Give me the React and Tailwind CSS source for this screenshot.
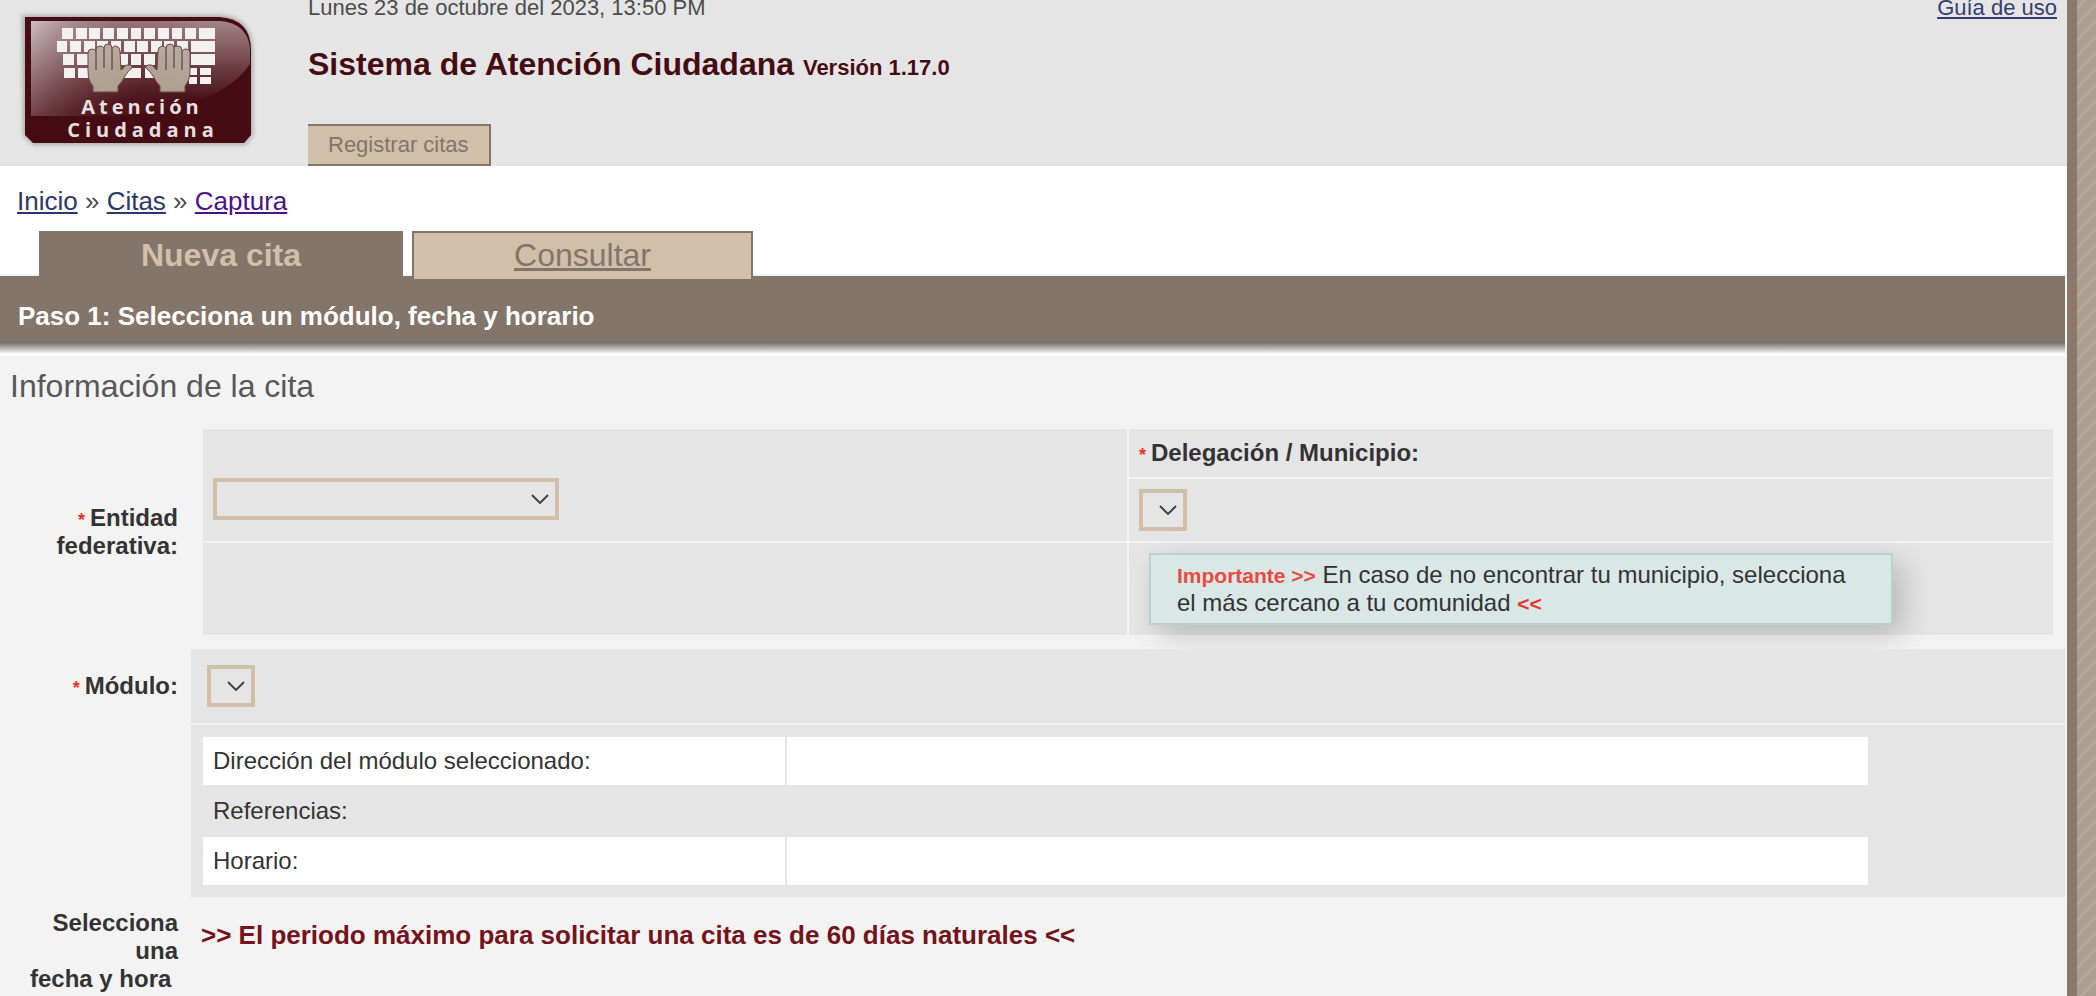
import React from 'react';

const keyRows = [
  { y: 28, h: 11, keys: [[62, 11], [76, 11], [89, 11], [103, 11], [117, 11], [131, 10], [144, 11], [158, 11], [172, 10], [185, 11], [199, 16]] },
  { y: 41, h: 11, keys: [[57, 10], [70, 11], [84, 11], [97, 11], [111, 10], [124, 11], [137, 11], [151, 11], [164, 10], [177, 11], [191, 24]] },
  { y: 54, h: 11, keys: [[63, 11], [77, 11], [90, 11], [104, 10], [117, 11], [131, 10], [144, 11], [158, 10], [191, 24]] },
  { y: 68, h: 10, keys: [[64, 11], [78, 11], [92, 10], [124, 17], [145, 10], [158, 11]] },
  { y: 68, h: 7, keys: [[189, 8], [200, 11]] },
  { y: 77, h: 7, keys: [[189, 8], [200, 11]] }
];

const Hand = () => (
  <g>
    <path
      d="M93 92 L93 86 Q88 81 88 70 L88 53 Q88 49 92 49 Q95 49 96 51 V50 Q96 46 100 46 Q103 46 104 48 Q104 44 108 44 Q112 44 112 48 Q113 46 116 46 Q120 47 120 51 L121 70 Q122 70 124 67 Q126 64 130 65 Q133 66 132 68 Q128 71 125 76 Q122 82 118 86 L118 92 Z"
      fill="url(#hand)"
      stroke="#704448"
      strokeWidth="1"
    />
    <path d="M96 51 V70 M104 48 V68 M112 48 V70" fill="none" stroke="#745254" strokeWidth="1.500" />
  </g>
);

const Logo = () => (
  <svg viewBox="0 0 260 150" className="block w-[260px] h-[150px]" role="img" aria-label="Atención Ciudadana">
    <defs>
      <linearGradient id="gloss" gradientUnits="userSpaceOnUse" x1="31" y1="21" x2="78" y2="122">
        <stop offset="0" stopColor="#fff" stopOpacity="0.74" />
        <stop offset="0.5" stopColor="#fff" stopOpacity="0.4" />
        <stop offset="1" stopColor="#fff" stopOpacity="0.08" />
      </linearGradient>
      <linearGradient id="glossRight" gradientUnits="userSpaceOnUse" x1="0" y1="21" x2="0" y2="100">
        <stop offset="0" stopColor="#fff" stopOpacity="0.5" />
        <stop offset="0.6" stopColor="#fff" stopOpacity="0.2" />
        <stop offset="1" stopColor="#fff" stopOpacity="0.02" />
      </linearGradient>
      <linearGradient id="fadeOut" x1="0" y1="0" x2="1" y2="0">
        <stop offset="0" stopColor="#fff" />
        <stop offset="0.75" stopColor="#000" />
      </linearGradient>
      <linearGradient id="fadeIn" x1="0" y1="0" x2="1" y2="0">
        <stop offset="0" stopColor="#000" />
        <stop offset="0.75" stopColor="#fff" />
      </linearGradient>
      <mask id="leftSide" maskUnits="userSpaceOnUse" x="0" y="0" width="260" height="150">
        <rect x="31" y="0" width="222" height="150" fill="url(#fadeOut)" />
      </mask>
      <mask id="rightSide" maskUnits="userSpaceOnUse" x="0" y="0" width="260" height="150">
        <rect x="31" y="0" width="222" height="150" fill="url(#fadeIn)" />
      </mask>
      <linearGradient id="hand" x1="0" y1="0" x2="0.3" y2="1">
        <stop offset="0" stopColor="#b9aca4" />
        <stop offset="1" stopColor="#ada08f" />
      </linearGradient>
      <filter id="soft" x="-10%" y="-10%" width="120%" height="120%">
        <feGaussianBlur stdDeviation="2" />
      </filter>
    </defs>
    <path d="M22 15 H221 Q252 17 253 50 V135 L246 145 H33 L23 136 Z" fill="#adadad" filter="url(#soft)" />
    <path d="M25 17 H219 Q251 19 251 50 V135 L244 143 H33 L25 135 Z" fill="#460c13" />
    <path d="M31 21 H220 Q247 23 250 48 L250 64 Q238 82 212 95 Q160 116 100 116 H31 Z" fill="url(#gloss)" mask="url(#leftSide)" />
    <path d="M31 21 H220 Q247 23 250 48 L250 64 Q238 82 212 95 Q160 116 100 116 H31 Z" fill="url(#glossRight)" mask="url(#rightSide)" />
    <g fill="#f3f0f0">
      {keyRows.map((row) =>
        row.keys.map(([x, w]) => <rect key={`${row.y}-${x}`} x={x} y={row.y} width={w} height={row.h} />)
      )}
    </g>
    <Hand />
    <g transform="translate(278 0) scale(-1 1)">
      <Hand />
    </g>
    <g fill="#e6dfe0" fontFamily="'Open Sans', 'Noto Sans', sans-serif" fontSize="20" fontWeight="700" textAnchor="middle">
      <text x="142" y="114" letterSpacing="4">Atención</text>
      <text x="143" y="137" letterSpacing="5">Ciudadana</text>
    </g>
  </svg>
);

const Dropdown = ({ id, label, className }) => (
  <span className={`relative inline-block h-[42px] ${className}`}>
    <select
      id={id}
      aria-label={label}
      className="block w-full h-full appearance-none border-4 border-[#d1bfaa] bg-[#e5e5e5] text-[22px] outline-none"
    >
      <option value=""></option>
    </select>
    <svg viewBox="0 0 18 10" className="absolute right-[10px] top-4 w-[18px] h-[10px] pointer-events-none" fill="none" stroke="#444" strokeWidth="2">
      <path d="M1 1 L9 9 L17 1" />
    </svg>
  </span>
);

const Required = () => <span className="text-[#ea3323] text-[18px] leading-none">* </span>;

const moduleRows = ['Dirección del módulo seleccionado:', 'Referencias:', 'Horario:'];

const App = () => {
  return (
    <div className="flex min-h-screen bg-[#f3f3f3] font-['Liberation_Sans',Arial,sans-serif] text-[24px] leading-7 text-[#333]">
      <div className="flex-1 min-w-0">
        <header className="flex bg-[#e5e5e5]">
          <div className="w-[308px] shrink-0">
            <Logo />
          </div>
          <div className="flex-1">
            <p className="text-[22px] leading-4 text-[#4d4d4d]">Lunes 23 de octubre del 2023, 13:50 PM</p>
            <h1 className="mt-7 text-[32px] leading-10 font-bold text-[#460c13]">
              Sistema de Atención Ciudadana <span className="text-[22px] leading-none">Versión 1.17.0</span>
            </h1>
            <button
              type="button"
              className="block mt-10 h-[42px] px-5 text-[22px] text-[#84756a] bg-[#d1bfaa] border-y-2 border-r-2 border-[#84756a]"
            >
              Registrar citas
            </button>
          </div>
          <div className="pr-[10px]">
            <a href="#guia" className="block text-[22px] leading-4 text-[#343e72] underline">Guía de uso</a>
          </div>
        </header>

        <div className="bg-white">
          <nav className="pt-[19px] pl-[17px] text-[26px] leading-8 text-[#4d4d4d]">
            <a href="#inicio" className="text-[#2c3768] underline">Inicio</a> »{' '}
            <a href="#citas" className="text-[#2c3768] underline">Citas</a> »{' '}
            <a href="#captura" className="text-[#4a1486] underline">Captura</a>
          </nav>
          <div className="mt-[14px] pl-[39px] flex gap-[9px] border-b-2 border-[#f3f3f3] text-[32px] leading-10 text-center">
            <div className="w-[364px] h-[45px] -mb-[2px] pt-1 font-bold bg-[#84756a] text-[#d1bfaa]">Nueva cita</div>
            <a
              href="#consultar"
              className="relative w-[341px] h-[48px] -mb-[5px] pt-[2px] bg-[#d1bfaa] text-[#84756a] border-2 border-b-0 border-[#84756a] underline"
            >
              Consultar
            </a>
          </div>
        </div>

        <main className="pr-[2px]">
          <h2 className="pt-6 pb-[10px] pl-[18px] text-[26px] leading-8 font-bold text-white bg-[#84756a]">
            Paso 1: Selecciona un módulo, fecha y horario
          </h2>
          <div className="h-[14px] bg-linear-to-b from-[#6e6b69] to-white to-85%"></div>

          <h3 className="mt-[10px] pl-[10px] text-[32px] leading-10 text-[#595757]">Información de la cita</h3>

          <form className="mt-[23px]">
            <div className="flex items-center">
              <label htmlFor="entidad" className="w-[191px] shrink-0 pr-[13px] text-right font-bold">
                <Required />Entidad federativa:
              </label>
              <div className="flex-1 mx-3 grid grid-cols-2 gap-[2px]">
                <div className="row-span-2 flex items-center px-[10px] pt-7 bg-[#e5e5e5]">
                  <Dropdown id="entidad" label="Entidad federativa" className="w-[346px]" />
                </div>
                <label htmlFor="municipio" className="p-[10px] font-bold bg-[#e5e5e5]">
                  <Required />Delegación / Municipio:
                </label>
                <div className="flex p-[10px] bg-[#e5e5e5]">
                  <Dropdown id="municipio" label="Delegación / Municipio" className="w-12" />
                </div>
                <div className="bg-[#e5e5e5]"></div>
                <div className="py-[10px] pl-5 bg-[#e5e5e5]">
                  <p className="w-[744px] max-w-full px-[26px] py-[6px] border-2 border-[#b9d1d0] bg-[#dae7e7] shadow-[10px_10px_30px_rgba(0,0,0,0.2)]">
                    <span className="text-[21px] leading-none font-bold text-[#ea4a40]">Importante &gt;&gt;</span> En caso de no
                    encontrar tu municipio, selecciona el más cercano a tu comunidad{' '}
                    <span className="text-[21px] leading-none font-bold text-[#ea3323]">&lt;&lt;</span>
                  </p>
                </div>
              </div>
            </div>

            <div className="mt-[14px] flex items-center">
              <label htmlFor="modulo" className="w-[191px] shrink-0 pr-[13px] text-right font-bold">
                <Required />Módulo:
              </label>
              <div className="relative flex-1 flex p-4 bg-[#e5e5e5]">
                <Dropdown id="modulo" label="Módulo" className="w-12" />
              </div>
            </div>

            <div className="mt-[2px] ml-[191px] p-[10px] bg-[#e5e5e5]">
              <table className="w-[90%] table-fixed border-separate border-spacing-[2px]">
                <tbody>
                  {moduleRows.map((title) => (
                    <tr key={title} className="odd:bg-white">
                      <th scope="row" className="w-[35%] p-[10px] text-left font-normal">{title}</th>
                      <td className="p-[10px]"></td>
                    </tr>
                  ))}
                </tbody>
              </table>
            </div>

            <div className="flex">
              <div className="w-[191px] shrink-0 pt-3 pr-[13px] text-right font-bold">
                Selecciona<br />una<br />fecha y hora&nbsp;
              </div>
              <p className="mt-[22px] pl-[10px] text-[26px] leading-8 font-bold text-[#74131b]">
                &gt;&gt; El periodo máximo para solicitar una cita es de 60 días naturales &lt;&lt;
              </p>
            </div>
          </form>
        </main>
      </div>
      <div className="w-[10px] shrink-0 bg-[#8b786d]"></div>
      <div className="w-[19px] shrink-0 bg-size-[16px_16px] bg-[linear-gradient(135deg,#a89e92_18%,#b9ab98_22%,#b9ab98_28%,#a89e92_32%,#a89e92_68%,#b9ab98_72%,#b9ab98_78%,#a89e92_82%)]"></div>
    </div>
  );
};

export default App;
